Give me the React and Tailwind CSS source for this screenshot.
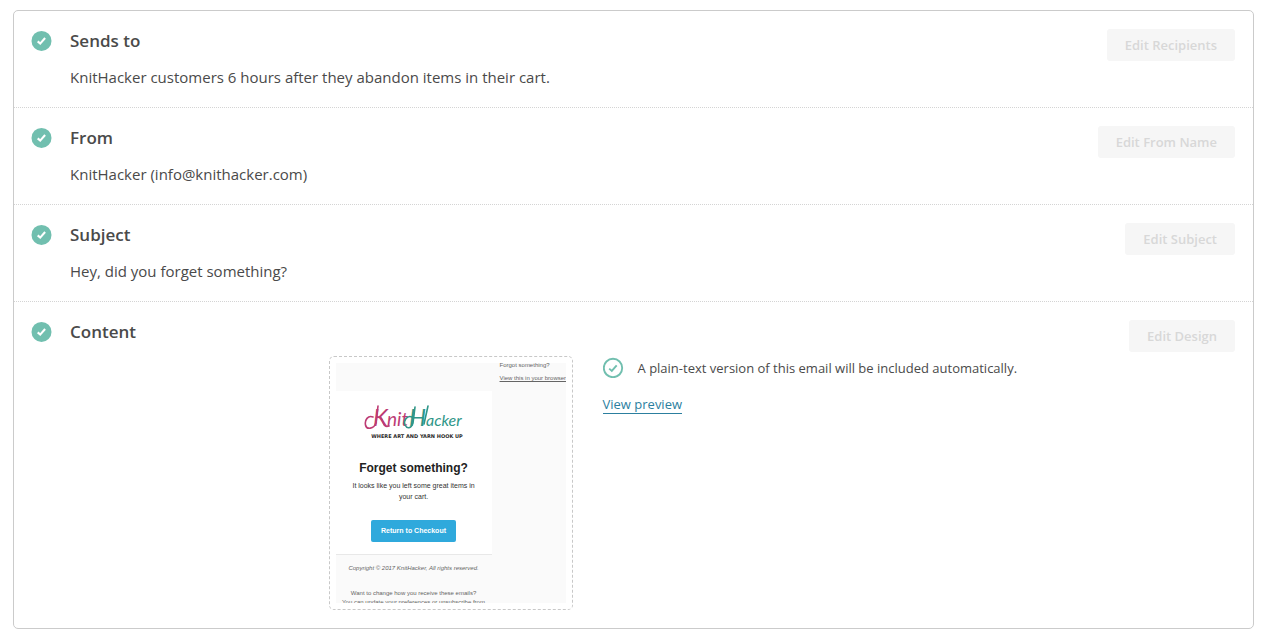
function SolidCheck() {
  return (
    <svg className="mt-px size-[21px] shrink-0" viewBox="0 0 21 21" aria-hidden="true">
      <circle cx="10.5" cy="10.9" r="10" fill="#71bfaf" />
      <path d="M6.7 11.4 9.2 13.6 14.1 8" fill="none" stroke="#fff" strokeWidth="2.1" />
    </svg>
  );
}

function OutlineCheck() {
  return (
    <svg className="size-[21px] shrink-0" viewBox="0 0 21 21" aria-hidden="true">
      <circle cx="10" cy="11" r="9.2" fill="none" stroke="#71bfaf" strokeWidth="1.9" />
      <path d="M6.2 11.6 8.8 13.9 13.7 8.3" fill="none" stroke="#71bfaf" strokeWidth="1.9" />
    </svg>
  );
}

function Section({ title, action, children }) {
  return (
    <section className="flex items-start border-b border-dotted border-[#d4d4d4] py-[18px] pr-[18px] pl-[17px] last:border-b-0">
      <SolidCheck />
      <div className="ml-[18px] min-w-0 flex-1">
        <h2 className="mb-3 text-[17px] leading-6 font-semibold">{title}</h2>
        {children}
      </div>
      <button
        type="button"
        disabled
        className="ml-6 h-8 shrink-0 rounded-[3px] bg-[#f6f6f6] px-[18px] pt-0.5 text-[13px] font-semibold text-[#d8d8d8]"
      >
        {action}
      </button>
    </section>
  );
}

function Logo() {
  return (
    <svg className="h-[38px] w-[100px]" viewBox="0 0 100 38" role="img" aria-label="KnitHacker">
      <g fontFamily="Lato, sans-serif" fontStyle="italic" fontWeight="400">
        <g fill="#bd3b74">
          <text x="9" y="23" fontSize="24">K</text>
          <text x="23" y="23" fontSize="19">nit</text>
        </g>
        <g fill="#2f9688">
          <text x="45" y="23" fontSize="24">H</text>
          <text x="62" y="23" fontSize="16">acker</text>
        </g>
      </g>
      <g fill="none" strokeWidth="1.6" strokeLinecap="round" strokeLinejoin="round">
        <path d="M9 14C4 12 .5 17 1.5 22S10 26 12 20L14 3" stroke="#bd3b74" />
        <path d="M17 15C20 19 19 25 25 23" stroke="#bd3b74" />
        <path d="M48 14C43 12 39 18 41 22S47 26 49 20L51 4" stroke="#2f9688" />
        <path d="M60 21 64 3" stroke="#2f9688" />
      </g>
      <text x="53" y="35" textAnchor="middle" fontSize="5" fontWeight="700" fontFamily="'DejaVu Sans', sans-serif" fill="#292929">
        WHERE ART AND YARN HOOK UP
      </text>
    </svg>
  );
}

function EmailThumbnail() {
  return (
    <div className="w-[244px] justify-self-end rounded-[5px] border border-dashed border-[#c8c8c8] p-1.5 font-['Liberation_Sans',Arial,sans-serif]">
      <div className="flex h-[240px] overflow-hidden bg-[#fafafa] text-center text-[#656565]">
        <div className="w-[156px] shrink-0 pt-7">
          <div className="flex h-[164px] flex-col items-center border-b border-[#e8e8e8] bg-white pt-3">
            <Logo />
            <h3 className="mt-[19px] text-[12px] leading-4 font-bold text-[#222]">Forget something?</h3>
            <p className="mt-1 px-3 text-[7px] leading-[11px] text-[#333]">
              It looks like you left some great items in your cart.
            </p>
            <span className="mt-[18px] rounded-[2px] bg-[#2fa9dc] px-2.5 text-[7px] leading-[22px] font-bold text-white">
              Return to Checkout
            </span>
          </div>
          <p className="mt-[9px] text-[6px] leading-2 italic">Copyright © 2017 KnitHacker, All rights reserved.</p>
          <p className="mt-[17px] text-[6px] leading-[9px] whitespace-nowrap">
            Want to change how you receive these emails?
            <br />
            You can update your preferences or unsubscribe from
          </p>
        </div>
        <div className="ml-2 text-left text-[6px] leading-[5px] whitespace-nowrap">
          <p>Forgot something?</p>
          <p className="mt-2 underline">View this in your browser</p>
        </div>
      </div>
    </div>
  );
}

export default function App() {
  return (
    <main className="bg-white pt-2.5 pr-[9px] pb-3 pl-[13px] font-['Open_Sans',sans-serif] text-[#4a4a4a]">
      <div className="rounded-[5px] border border-[#cbcbcb]">
        <Section title="Sends to" action="Edit Recipients">
          <p className="text-[15px] leading-6">KnitHacker customers 6 hours after they abandon items in their cart.</p>
        </Section>
        <Section title="From" action="Edit From Name">
          <p className="text-[15px] leading-6">KnitHacker (info@knithacker.com)</p>
        </Section>
        <Section title="Subject" action="Edit Subject">
          <p className="text-[15px] leading-6">Hey, did you forget something?</p>
        </Section>
        <Section title="Content" action="Edit Design">
          <div className="grid grid-cols-2 gap-[30px]">
            <EmailThumbnail />
            <div className="pt-px text-[13px]">
              <p className="flex items-center gap-3.5 leading-5 whitespace-nowrap">
                <OutlineCheck />
                A plain-text version of this email will be included automatically.
              </p>
              <a href="#preview" className="mt-[17px] inline-block border-b border-[#2c7f9f] leading-[18px] text-[#2c7f9f]">
                View preview
              </a>
            </div>
          </div>
        </Section>
      </div>
    </main>
  );
}
